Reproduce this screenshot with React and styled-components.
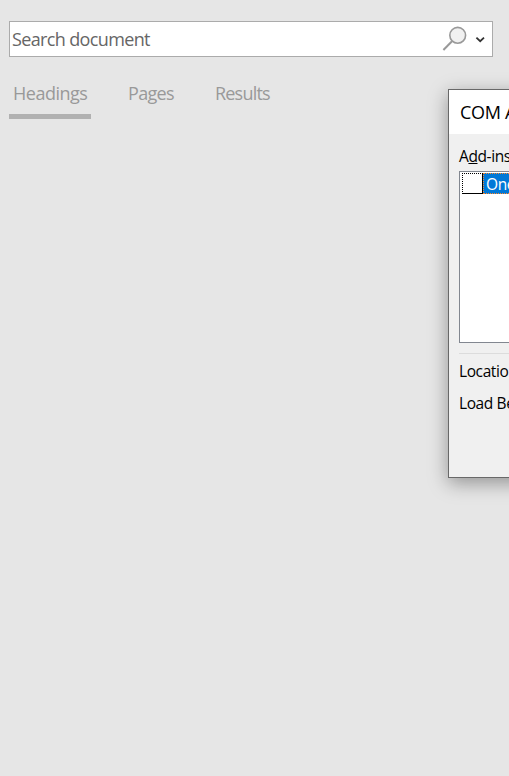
import React from 'react';
import styled, { createGlobalStyle } from 'styled-components';

const GlobalStyle = createGlobalStyle`
  * { box-sizing: border-box; }
  html, body { margin: 0; background: #e6e6e6; overflow: hidden; }
  body { font-family: "Open Sans", "Noto Sans", sans-serif; }
`;

const Pane = styled.main`
  position: relative;
  width: 509px;
  height: 776px;
  padding: 21px 16px 0 9px;
  overflow: hidden;
  background: #e6e6e6;
`;

const SearchBox = styled.div`
  display: flex;
  align-items: center;
  height: 36px;
  border: 1px solid #ababab;
  background: #fff;
`;

const SearchText = styled.span`
  flex: 1;
  padding-left: 2px;
  color: #666;
  font-size: 18px;
  line-height: 34px;
  letter-spacing: -0.64px;
  white-space: nowrap;
`;

const SearchIcons = styled.svg`
  display: block;
  width: 62px;
  height: 34px;
`;

const Tabs = styled.nav`
  display: flex;
  gap: 33px;
  margin-top: 20px;
`;

const Tab = styled.div`
  width: ${(p) => p.$width}px;
  height: 42px;
  padding-left: 4px;
  border-bottom: 5px solid ${(p) => (p.$active ? '#b1b1b1' : 'transparent')};
  color: #999;
  font-size: 18px;
  line-height: 32px;
  letter-spacing: ${(p) => p.$spacing}px;
  white-space: nowrap;
`;

const Dialog = styled.section`
  position: absolute;
  left: 448px;
  top: 89px;
  width: 560px;
  height: 389px;
  border: 1px solid #686868;
  background: #f0f0f0;
  box-shadow: 0 5px 18px rgba(0, 0, 0, 0.36);
  color: #000;
`;

const TitleBar = styled.header`
  height: 44px;
  padding-left: 11px;
  background: #fff;
  font-size: 18px;
  line-height: 45px;
  letter-spacing: -0.3px;
  white-space: nowrap;
`;

const DialogBody = styled.div`
  display: flex;
  flex-direction: column;
  padding: 10px 10px 0;
`;

const Label = styled.div`
  height: ${(p) => p.$height}px;
  font-size: 15.5px;
  line-height: 24px;
  letter-spacing: -0.4px;
  white-space: nowrap;
`;

const ListBox = styled.div`
  height: 172px;
  margin: 1px 0 10px;
  padding: 1px;
  border: 1px solid #828790;
  background: #fff;
`;

const ListItem = styled.div`
  display: flex;
  height: 21px;
`;

const Checkbox = styled.span`
  width: 21px;
  margin-left: 1px;
  border: 1px dotted #000;
  border-right-style: solid;
  border-bottom-style: solid;
  background: #fff;
`;

const Selected = styled.span`
  flex: 1;
  padding-left: 2px;
  border: 1px dotted #ff8728;
  background: #0078d7;
  color: #fff;
  font-size: 15.5px;
  line-height: 20px;
  letter-spacing: -0.4px;
`;

const Divider = styled.div`
  height: 1px;
  margin-bottom: 5px;
  background: #dcdcdc;
`;

export default function App() {
  return (
    <>
      <GlobalStyle />
      <Pane>
        <SearchBox>
          <SearchText>Search document</SearchText>
          <SearchIcons viewBox="430 22 62 34" fill="none">
            <circle cx="457.7" cy="35.3" r="7.9" fill="#f1f1f1" stroke="#999" strokeWidth="1.6" />
            <path d="M452 41.2 443.4 50" stroke="#999" strokeWidth="2" />
            <path d="m476.4 37.6 3.8 3.6 3.8-3.6" stroke="#333" strokeWidth="1.8" />
          </SearchIcons>
        </SearchBox>
        <Tabs>
          <Tab $width={82} $spacing={-0.5} $active>Headings</Tab>
          <Tab $width={54} $spacing={-0.7}>Pages</Tab>
          <Tab $width={64} $spacing={-0.8}>Results</Tab>
        </Tabs>
        <Dialog>
          <TitleBar>COM Add-ins</TitleBar>
          <DialogBody>
            <Label $height={26}>A<u>d</u>d-ins available:</Label>
            <ListBox>
              <ListItem>
                <Checkbox />
                <Selected>OneNote</Selected>
              </ListItem>
            </ListBox>
            <Divider />
            <Label $height={32}>Location:</Label>
            <Label $height={32}>Load Behavior:</Label>
          </DialogBody>
        </Dialog>
      </Pane>
    </>
  );
}
